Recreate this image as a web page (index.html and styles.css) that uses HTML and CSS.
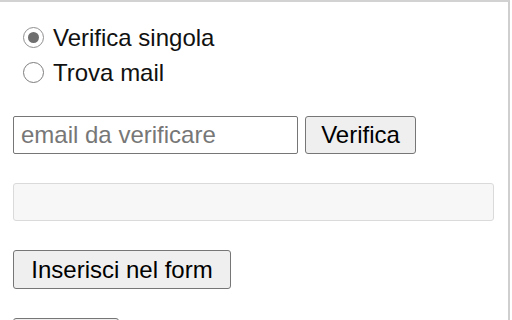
FILE: index.html
```html
<!DOCTYPE html>
<html lang="it">
<head>
    <meta charset="UTF-8">
    <title>Verifica mail</title>
    <link rel="stylesheet" href="styles.css">
</head>
<body>
<div class="popup">
    <!-- Modalita -->
    <div class="modes">
        <label class="mode">
            <input type="radio" name="mode" value="single" checked>
            <span>Verifica singola</span>
        </label>
        <label class="mode">
            <input type="radio" name="mode" value="find">
            <span>Trova mail</span>
        </label>
    </div>

    <div class="check-row">
        <input type="text" id="email" class="email-input" placeholder="email da verificare">
        <button class="btn btn-verify">Verifica</button>
    </div>

    <div class="result" id="result"></div>

    <button class="btn btn-insert">Inserisci nel form</button>
    <button class="btn btn-copy">Copia</button>
</div>
</body>
</html>
```

FILE: styles.css
```css
html, body {
    margin: 0;
    padding: 0;
    background: #fff;
}
.popup {
    width: 510px;
    height: 320px;
    box-sizing: border-box;
    overflow: hidden;
    border-top: 2px solid #d2d2d2;
    border-right: 2px solid #cfcfcf;
    padding: 18px 0 0 13px;
    font-family: "Liberation Sans", Arial, sans-serif;
    font-size: 24px;
    color: #111;
}
.modes {
    display: flex;
    flex-direction: column;
}
.mode {
    display: flex;
    align-items: center;
    height: 35px;
    line-height: 35px;
}
.mode input {
    appearance: none;
    -webkit-appearance: none;
    width: 21px;
    height: 21px;
    margin: 0 9px 0 10px;
    border: 1.5px solid #7d7d7d;
    border-radius: 50%;
    background: #fff;
    box-sizing: border-box;
    position: relative;
}
.mode input:checked {
    border-color: #8f8f8f;
}
.mode input:checked::after {
    content: "";
    position: absolute;
    left: 3.5px;
    top: 3.5px;
    width: 11px;
    height: 11px;
    border-radius: 50%;
    background: #6f6f6f;
}
.check-row {
    display: flex;
    gap: 7px;
    margin-top: 26px;
}
.email-input {
    width: 285px;
    height: 38px;
    box-sizing: border-box;
    margin: 0;
    padding: 0 7px;
    border: 1px solid #767676;
    border-radius: 2px;
    font-family: inherit;
    font-size: 24px;
    color: #111;
}
.email-input::placeholder {
    color: #777;
}
.btn {
    display: block;
    box-sizing: border-box;
    height: 38px;
    padding: 0;
    margin: 0;
    background-color: #efefef;
    border: 1px solid #767676;
    border-radius: 3px;
    font-family: inherit;
    font-size: 24px;
    color: #000;
    text-align: center;
}
.btn-verify {
    width: 111px;
}
.result {
    width: 481px;
    height: 38px;
    box-sizing: border-box;
    margin-top: 29px;
    background: #f7f7f7;
    border: 1px solid #dadada;
    border-radius: 3px;
}
.btn-insert {
    width: 218px;
    height: 39px;
    margin-top: 29px;
}
.btn-copy {
    width: 106px;
    margin-top: 29px;
}
```
